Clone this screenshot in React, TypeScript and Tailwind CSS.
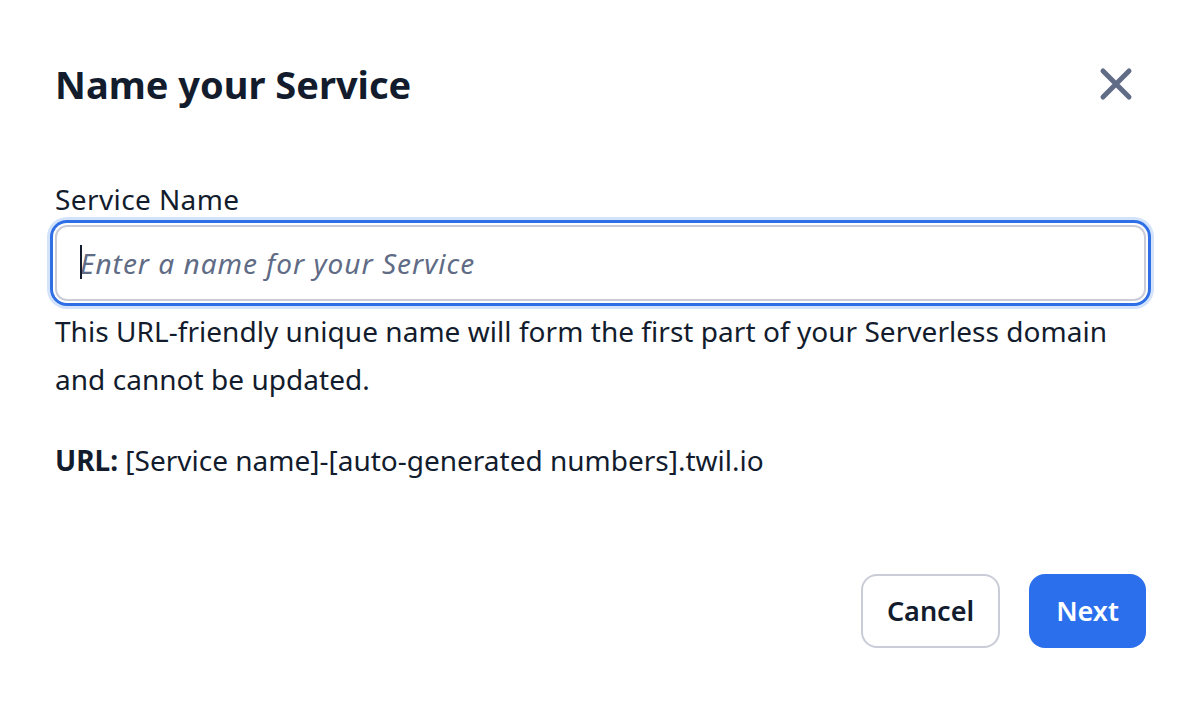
import React from 'react';

const font = { fontFamily: '"Noto Sans", "Open Sans", sans-serif' };

const CloseIcon: React.FC = () => (
  <svg width="34" height="34" viewBox="0 0 34 34" fill="none">
    <path
      d="M4 4L30 30M30 4L4 30"
      stroke="#606b85"
      strokeWidth="5"
      strokeLinecap="round"
    />
  </svg>
);

const App: React.FC = () => {
  return (
    <div
      className="min-h-screen bg-white pl-[55px] pr-[58px] pt-[61px] text-[#121c2d]"
      style={font}
    >
      {/* Header */}
      <div className="flex items-center justify-between">
        <h1 className="text-[38px] font-bold leading-[46px]">
          Name your Service
        </h1>
        <button className="mr-[10px] flex h-[40px] w-[40px] items-center justify-center">
          <CloseIcon />
        </button>
      </div>

      {/* Field */}
      <div className="mt-[74px]">
        <label className="mb-[8px] block text-[28px] leading-[36px] tracking-[0.4px]">
          Service Name
        </label>
        <div className="relative">
          <input
            type="text"
            placeholder="Enter a name for your Service"
            className="h-[76px] w-full rounded-[12px] border-2 border-[#cacdd8] bg-white px-[23px] text-[28px] italic tracking-[1px] text-[#121c2d] placeholder:text-[#606b85] outline-none shadow-[0_0_0_2px_#ffffff,0_0_0_5px_#2f6fe6,0_0_0_8px_#d3e3fc]"
            style={font}
          />
          <span className="pointer-events-none absolute left-[25px] top-[20px] h-[34px] w-[2px] bg-[#121c2d]" />
        </div>
        <p className="mt-[6px] text-[28px] leading-[48px] tracking-[0.04px]">
          This URL-friendly unique name will form the first part of your Serverless domain
          and cannot be updated.
        </p>
        <p className="mt-[33px] text-[28px] leading-[48px]">
          <span className="font-bold">URL:</span> [Service name]-[auto-generated numbers].twil.io
        </p>
      </div>

      {/* Footer */}
      <div className="mt-[90px] flex justify-end gap-[29px]">
        <button className="h-[74px] w-[139px] rounded-[16px] border-2 border-[#cacdd8] bg-white text-[27px] font-semibold text-[#121c2d]">
          Cancel
        </button>
        <button className="h-[74px] w-[117px] rounded-[16px] bg-[#2c6fec] text-[27px] font-semibold text-white">
          Next
        </button>
      </div>
    </div>
  );
};

export default App;
